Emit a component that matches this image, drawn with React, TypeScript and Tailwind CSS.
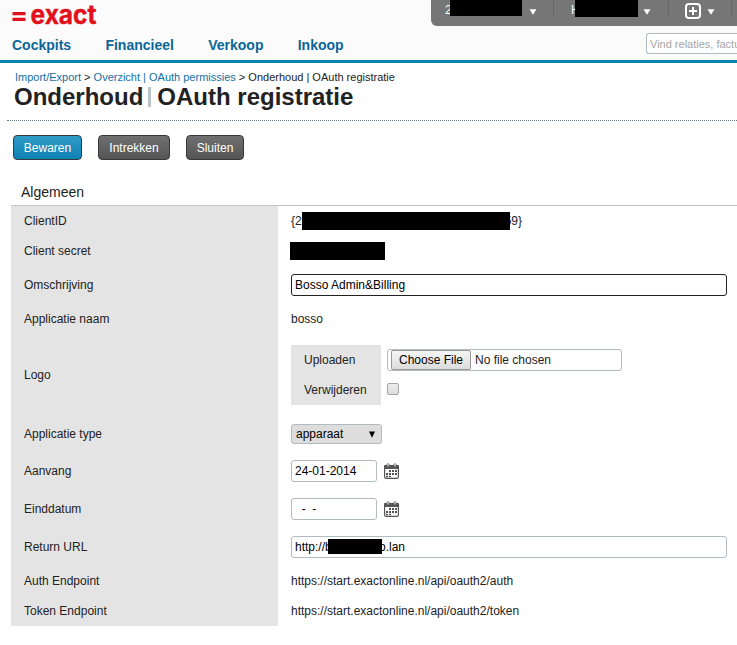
import React from "react";

const Caret = ({ className = "" }: { className?: string }) => (
  <svg width="8" height="6" viewBox="0 0 8 6" className={`shrink-0 ${className}`}>
    <path d="M0.5 0.3h7L4 5.8z" fill="#fff" />
  </svg>
);

const Separator = ({ className = "" }: { className?: string }) => (
  <div className={`h-[17px] w-px shrink-0 bg-[#66666b] ${className}`} />
);

const Calendar = () => (
  <svg width="15" height="16" viewBox="0 0 15 16" className="ml-[7px] shrink-0">
    <rect x="0.6" y="2.600" width="13.8" height="12.8" rx="1.500" fill="#fff" stroke="#555" strokeWidth="1.200" />
    <path d="M0 3Q0 2 1 2h13q1 0 1 1v3H0z" fill="#555" />
    <path d="M3 4V1.500Q4 -0.500 5 1.500V4zM10 4V1.500Q11 -0.500 12 1.500V4z" fill="#fff" stroke="#555" strokeWidth="1" />
    <path
      d="M5 7h2v2H5zM8 7h2v2H8zM11 7h2v2h-2zM2 10h2v2H2zM5 10h2v2H5zM8 10h2v2H8zM11 10h2v2h-2zM2 12.800h2v1.400H2zM5 12.800h2v1.400H5z"
      fill="#555"
    />
  </svg>
);

const Row = ({ label, h, children }: { label: string; h: string; children: React.ReactNode }) => (
  <div className={`flex ${h}`}>
    <div className="flex w-[267px] shrink-0 items-center bg-[#e4e4e4] pl-[13px]">{label}</div>
    <div className="flex items-center pl-[13px]">{children}</div>
  </div>
);

const field = "flex h-[22px] items-center rounded-[3px] border bg-white px-[3px] text-black whitespace-pre";
const button = "flex h-[25px] items-center justify-center rounded-[4px] border border-[#383838] text-white";

export default function App() {
  return (
    <div className="h-[645px] w-[737px] overflow-hidden bg-white font-['Liberation_Sans',Arial,sans-serif] text-[12px] leading-[14px] text-[#222]">
      <header className="h-[63px] border-b-[3px] border-[#0a83b5] bg-[#fbfbfb]">
        <div className="flex h-[33px] items-start justify-between">
          <svg width="110" height="30" viewBox="0 0 110 30" role="img" aria-label="exact">
            <path d="M12.500 12h13v3.300h-13zM12.500 17.700h13V21h-13z" fill="#e2101b" />
            <text
              x="30.500"
              y="23.800"
              textLength="66"
              lengthAdjust="spacingAndGlyphs"
              fill="#e2101b"
              stroke="#e2101b"
              strokeWidth="0.400"
              className="font-['Inter',sans-serif] text-[26px] font-bold"
            >
              exact
            </text>
          </svg>
          <div className="flex h-[26px] w-[306px] rounded-bl-[6px] bg-[#767676] text-white">
            <div className="ml-[14px] mt-[3px] w-[5px] shrink-0">2</div>
            <div className="relative h-[16px] w-[72px] shrink-0 bg-black" />
            <Caret className="ml-[7px] mt-[9px]" />
            <Separator className="ml-[16px]" />
            <div className="ml-[17px] mt-[3px] w-[4px] shrink-0">H</div>
            <div className="relative h-[17px] w-[63px] shrink-0 bg-black" />
            <Caret className="ml-[5px] mt-[9px]" />
            <Separator className="ml-[17px]" />
            <svg width="16" height="16" viewBox="0 0 16 16" className="ml-[16px] mt-[3px] shrink-0">
              <rect x="1" y="1" width="14" height="14" rx="3" fill="none" stroke="#fff" strokeWidth="2" />
              <path d="M8 4v8M4 8h8" stroke="#fff" strokeWidth="2" />
            </svg>
            <Caret className="ml-[6px] mt-[9px]" />
            <Separator className="ml-[16px]" />
          </div>
        </div>
        <div className="flex justify-between">
          <nav className="flex gap-[34.300px] pl-3 pt-1 text-[14px] font-bold leading-4 text-[#0b6698]">
            <a>Cockpits</a>
            <a>Financieel</a>
            <a>Verkoop</a>
            <a>Inkoop</a>
          </nav>
          <div className="h-[21px] w-[91px] overflow-hidden whitespace-nowrap rounded-l-[3px] border border-r-0 border-[#b0bcc4] bg-white pl-[3px] text-[11px] leading-[20px] text-[#a5a5a5]">
            Vind relaties, facturen
          </div>
        </div>
      </header>

      <div className="ml-[7px] h-[58px] border-b border-dotted border-[#6b7b85] pl-[7px] pt-2">
        <div className="pl-px text-[11px] leading-[13px]">
          <a className="text-[#1270a5]">Import/Export</a> &gt; <a className="text-[#1270a5]">Overzicht | OAuth permissies</a> &gt;{" "}
          Onderhoud | OAuth registratie
        </div>
        <h1 className="flex text-[24px] font-bold leading-[25px]">
          Onderhoud
          <span className="ml-[5px] mr-[6px] mt-[3px] h-[20px] w-[3px] bg-[#b9c3c8]" />
          OAuth registratie
        </h1>
      </div>

      <div className="flex gap-4 pl-[13px] pt-[14px]">
        <button className={`${button} w-[69px] bg-linear-to-b from-[#2f9bc8] to-[#0b81b3]`}>Bewaren</button>
        <button className={`${button} w-[72px] bg-linear-to-b from-[#707070] to-[#555]`}>Intrekken</button>
        <button className={`${button} w-[58px] bg-linear-to-b from-[#707070] to-[#555]`}>Sluiten</button>
      </div>

      <section className="ml-[11px] mt-[23px]">
        <h2 className="h-[23px] border-b border-[#c4c4c4] pl-[10px] text-[14px] leading-[18px]">Algemeen</h2>
        <Row label="ClientID" h="h-[30px]">
          <span className="w-[11px]">{"{2"}</span>
          <span className="relative z-10 h-[18px] w-[208px] bg-black" />
          <span className="flex w-[12px] justify-end">{"59}"}</span>
        </Row>
        <Row label="Client secret" h="h-[30px]">
          <span className="-ml-px h-[18px] w-[95px] bg-black" />
        </Row>
        <Row label="Omschrijving" h="h-[38px]">
          <div className={`${field} w-[436px] border-[#222]`}>Bosso Admin&amp;Billing</div>
        </Row>
        <Row label="Applicatie naam" h="h-[30px]">bosso</Row>
        <Row label="Logo" h="h-[82px]">
          <div className="flex h-[60px]">
            <div className="flex w-[90px] flex-col bg-[#e4e4e4] pl-[13px] leading-[30px]">
              <span>Uploaden</span>
              <span>Verwijderen</span>
            </div>
            <div className="flex flex-col pl-[6px] pt-1">
              <div className="flex h-[22px] w-[235px] items-center rounded-[3px] border border-[#b0bcc4] pl-[3px] text-black">
                <span className="flex h-5 w-[80px] items-center justify-center rounded-[2px] border border-[#999] bg-linear-to-b from-[#f5f5f5] to-[#dcdcdc]">
                  Choose File
                </span>
                <span className="ml-1 text-[#222]">No file chosen</span>
              </div>
              <div className="mt-[12px] h-3 w-3 rounded-[2px] border border-[#a5a5a5] bg-linear-to-b from-[#ededed] to-[#dcdcdc]" />
            </div>
          </div>
        </Row>
        <Row label="Applicatie type" h="h-[36px]">
          <div className="flex h-5 w-[91px] items-center justify-between rounded-[3px] border border-[#b0bcc4] bg-[#ddd] pl-1 pr-[6px] text-black">
            apparaat
            <svg width="6" height="7" viewBox="0 0 6 7">
              <path d="M0 0.500h6L3 6.800z" />
            </svg>
          </div>
        </Row>
        <Row label="Aanvang" h="h-[38px]">
          <div className={`${field} w-[86px] border-[#b0bcc4]`}>24-01-2014</div>
          <Calendar />
        </Row>
        <Row label="Einddatum" h="h-[38px]">
          <div className={`${field} w-[86px] border-[#b0bcc4]`}>{"  -  -"}</div>
          <Calendar />
        </Row>
        <Row label="Return URL" h="h-[38px]">
          <div className={`${field} w-[436px] border-[#b0bcc4]`}>
            <span className="w-[33px]">http://b</span>
            <span className="relative z-10 mb-px h-[15px] w-[54px] bg-black" />
            <span className="flex w-[23px] justify-end">o.lan</span>
          </div>
        </Row>
        <Row label="Auth Endpoint" h="h-[30px]">https://start.exactonline.nl/api/oauth2/auth</Row>
        <Row label="Token Endpoint" h="h-[30px]">https://start.exactonline.nl/api/oauth2/token</Row>
      </section>
    </div>
  );
}
